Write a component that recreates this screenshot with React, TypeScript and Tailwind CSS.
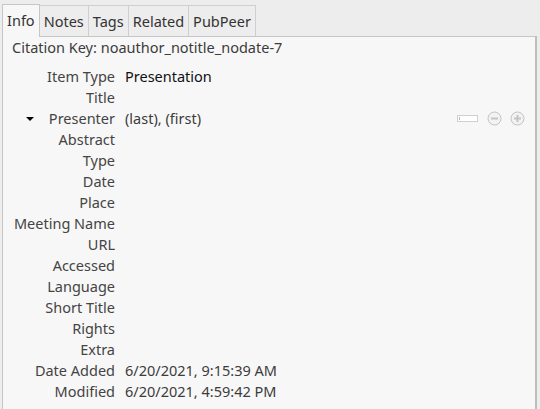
import React from "react";

const rows: [string, string][] = [
  ["Item Type", "Presentation"],
  ["Title", ""],
  ["Presenter", "(last), (first)"],
  ["Abstract", ""],
  ["Type", ""],
  ["Date", ""],
  ["Place", ""],
  ["Meeting Name", ""],
  ["URL", ""],
  ["Accessed", ""],
  ["Language", ""],
  ["Short Title", ""],
  ["Rights", ""],
  ["Extra", ""],
  ["Date Added", "6/20/2021, 9:15:39 AM"],
  ["Modified", "6/20/2021, 4:59:42 PM"],
];

const tabs = ["Info", "Notes", "Tags", "Related", "PubPeer"];

export default function App() {
  return (
    <div
      className="w-[540px] h-[409px] overflow-hidden bg-[#ededed] text-[14.5px] text-[#3c3c3c]"
      style={{ fontFamily: '"Noto Sans", "Open Sans", sans-serif' }}
    >
      <div className="flex pl-[2px] pt-[3px] h-[36px] items-end">
        {tabs.map((t, i) =>
          i === 0 ? (
            <div
              key={t}
              className="h-[33px] px-[4px] bg-[#f7f7f7] border border-b-0 border-[#c6c6c6] flex items-center text-[#333] relative z-10 -mb-px leading-none pb-[2px]"
            >
              {t}
            </div>
          ) : (
            <div
              key={t}
              className="h-[31px] px-[4px] border border-l-0 border-b-0 border-[#cfcfcf] flex items-center text-[#333] leading-none"
            >
              {t}
            </div>
          )
        )}
      </div>
      <div className="ml-[2px] mr-[3px] bg-[#f7f7f7] border border-[#c6c6c6] border-r-[#bdbdbd] border-r-2 h-[400px]">
        <div className="pl-[9px] h-[21px] leading-[21px] text-[#3c3c3c]">
          Citation Key: noauthor_notitle_nodate-7
        </div>
        <div className="pt-[8px]">
          {rows.map(([label, value]) => (
            <div key={label} className="flex h-[21px] items-center leading-none">
              <div className="w-[112px] flex justify-end items-center relative text-[#444]">
                {label === "Presenter" && (
                  <span className="absolute left-[23px] top-[6px] w-0 h-0 border-l-[4px] border-r-[4px] border-t-[4px] border-l-transparent border-r-transparent border-t-black" />
                )}
                {label}
              </div>
              <div
                className={
                  "ml-[10px] flex-1 " +
                  (label === "Item Type" ? "text-[#111]" : "text-[#3c3c3c]")
                }
              >
                {value}
              </div>
              {label === "Presenter" && (
                <div className="flex items-center mr-[10px]">
                  <div className="w-[21px] h-[7px] border border-[#d0d0d0] bg-white mr-[9px] relative">
                    <span className="absolute left-[1px] top-[1px] w-px h-[3px] bg-[#bbb]" />
                  </div>
                  <svg width="15" height="15" viewBox="0 0 15 15" className="mr-[8px]">
                    <circle cx="7.5" cy="7.5" r="6.5" fill="#f2f2f2" stroke="#c4c4c4" />
                    <rect x="4" y="6.5" width="7" height="2" fill="#c4c4c4" />
                  </svg>
                  <svg width="15" height="15" viewBox="0 0 15 15">
                    <circle cx="7.5" cy="7.5" r="6.5" fill="#f2f2f2" stroke="#c4c4c4" />
                    <rect x="4" y="6.5" width="7" height="2" fill="#c4c4c4" />
                    <rect x="6.5" y="4" width="2" height="7" fill="#c4c4c4" />
                  </svg>
                </div>
              )}
            </div>
          ))}
        </div>
      </div>
    </div>
  );
}
